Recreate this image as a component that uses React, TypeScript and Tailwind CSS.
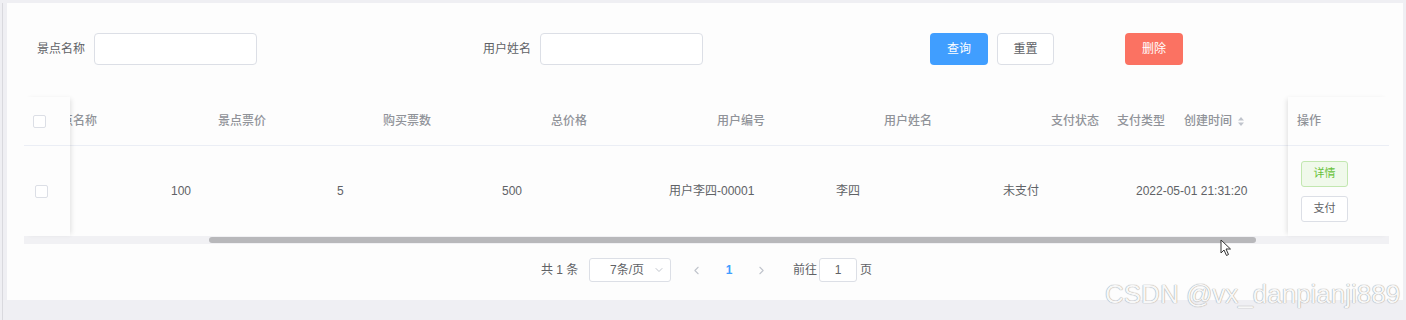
import { ChevronDown, ChevronLeft, ChevronRight } from "lucide-react";

function Checkbox() {
  return <span className="block h-[13px] w-[13px] rounded-[2px] border border-[#dcdfe6] bg-white" />;
}

function SortCaret() {
  return (
    <svg width="8" height="11" viewBox="0 0 8 11" className="ml-[5px]">
      <path d="M4 1 L7 4.5 H1 Z" fill="#c0c4cc" />
      <path d="M4 10 L7 6.5 H1 Z" fill="#c0c4cc" />
    </svg>
  );
}

export default function App() {
  return (
    <div className="relative flex h-[320px] w-[1406px] overflow-hidden bg-[#efeff3] pt-[3px] font-['Liberation_Sans','Noto_Sans_CJK_SC',sans-serif] text-[12px] text-[#606266]">
      <div className="ml-[2px] h-full w-[1px] bg-[#d9d9de]" />
      <div className="ml-[4px] flex h-[297px] w-[1396px] flex-col bg-[#fdfdfd]">
        {/* search form */}
        <div className="flex items-center pl-[30px] pt-[30px]">
          <span className="w-[57px] text-[#606266]">景点名称</span>
          <div className="h-[32px] w-[163px] rounded-[4px] border border-[#dcdfe6] bg-white" />
          <span className="ml-[226px] w-[57px] text-[#606266]">用户姓名</span>
          <div className="h-[32px] w-[163px] rounded-[4px] border border-[#dcdfe6] bg-white" />
          <button className="ml-[227px] h-[32px] w-[58px] rounded-[4px] bg-[#409eff] text-white">查询</button>
          <button className="ml-[9px] h-[32px] w-[57px] rounded-[4px] border border-[#dcdfe6] bg-white text-[#606266]">重置</button>
          <button className="ml-[71px] h-[32px] w-[58px] rounded-[4px] bg-[#fb7262] text-white">删除</button>
        </div>

        {/* table */}
        <div className="relative ml-[17px] mt-[32px] w-[1365px]">
          <div className="flex">
            <div className="relative z-10 w-[46px] bg-[#fdfdfd] shadow-[3px_0_5px_-2px_rgba(0,0,0,0.12)]">
              <div className="flex h-[49px] items-center border-b border-[#ebeef5] pl-[9px]">
                <Checkbox />
              </div>
              <div className="flex h-[90px] items-center pl-[11px]">
                <Checkbox />
              </div>
            </div>

            <div className="min-w-0 flex-1 overflow-hidden">
              <div className="flex h-[49px] items-center whitespace-nowrap border-b border-[#ebeef5] font-medium text-[#909399]">
                <div className="w-[148px] shrink-0"><span className="ml-[-21px]">景点名称</span></div>
                <div className="w-[165px] shrink-0">景点票价</div>
                <div className="w-[168px] shrink-0">购买票数</div>
                <div className="w-[166px] shrink-0">总价格</div>
                <div className="w-[167px] shrink-0">用户编号</div>
                <div className="w-[167px] shrink-0">用户姓名</div>
                <div className="w-[66px] shrink-0">支付状态</div>
                <div className="w-[67px] shrink-0">支付类型</div>
                <div className="flex shrink-0 items-center">创建时间<SortCaret /></div>
              </div>
              <div className="flex h-[90px] items-center whitespace-nowrap text-[#606266]">
                <div className="w-[101px] shrink-0" />
                <div className="w-[166px] shrink-0">100</div>
                <div className="w-[165px] shrink-0">5</div>
                <div className="w-[167px] shrink-0">500</div>
                <div className="w-[167px] shrink-0">用户李四-00001</div>
                <div className="w-[167px] shrink-0">李四</div>
                <div className="w-[133px] shrink-0">未支付</div>
                <div className="shrink-0">2022-05-01 21:31:20</div>
              </div>
            </div>

            <div className="relative z-10 w-[101px] bg-[#fdfdfd] shadow-[-3px_0_5px_-2px_rgba(0,0,0,0.12)]">
              <div className="flex h-[49px] items-center border-b border-[#ebeef5] pl-[9px] font-medium text-[#909399]">操作</div>
              <div className="flex h-[90px] flex-col justify-center gap-[9px] pl-[13px]">
                <button className="h-[26px] w-[47px] rounded-[3px] border border-[#c2e7b0] bg-[#f0f9eb] text-[11px] text-[#67c23a]">详情</button>
                <button className="h-[26px] w-[47px] rounded-[3px] border border-[#dcdfe6] bg-white text-[11px] text-[#606266]">支付</button>
              </div>
            </div>
          </div>

          {/* horizontal scrollbar */}
          <div className="flex h-[8px] items-center bg-[#f1f1f4]">
            <div className="ml-[185px] h-[6px] w-[1047px] rounded-[3px] bg-[#b8b8bb]" />
          </div>
        </div>

        {/* pagination */}
        <div className="mt-[14px] flex h-[24px] items-center pl-[534px] text-[#606266]">
          <span className="w-[48px]">共 1 条</span>
          <div className="flex h-[24px] w-[82px] items-center justify-between rounded-[3px] border border-[#dcdfe6] bg-white pl-[20px] pr-[5px]">
            <span>7条/页</span>
            <ChevronDown className="h-[12px] w-[12px] text-[#c0c4cc]" />
          </div>
          <div className="ml-[10px] flex w-[30px] justify-center text-[#c0c4cc]"><ChevronLeft className="h-[13px] w-[13px]" /></div>
          <div className="ml-[3px] flex w-[30px] justify-center font-bold text-[#409eff]">1</div>
          <div className="ml-[2px] flex w-[30px] justify-center text-[#c0c4cc]"><ChevronRight className="h-[13px] w-[13px]" /></div>
          <span className="ml-[17px] w-[26px]">前往</span>
          <div className="flex h-[24px] w-[38px] items-center justify-center rounded-[3px] border border-[#dcdfe6] bg-white">1</div>
          <span className="ml-[3px]">页</span>
        </div>
      </div>

      {/* mouse cursor */}
      <svg width="12" height="18" viewBox="0 0 12 18" className="absolute left-[1220px] top-[239px]">
        <path d="M1 1 L1 14 L4 11 L6.5 16.5 L8.5 15.5 L6 10 L10.5 10 Z" fill="#fff" stroke="#333" strokeWidth="1" strokeLinejoin="round" />
      </svg>

      {/* watermark */}
      <div className="absolute left-[1105px] top-[281px] whitespace-nowrap text-[26px] leading-[26px] text-[#f7f7f7] [text-shadow:0_0_1px_#9a9a9a,0_0_1px_#b0b0b0]">
        CSDN @vx_danpianji889
      </div>
    </div>
  );
}
